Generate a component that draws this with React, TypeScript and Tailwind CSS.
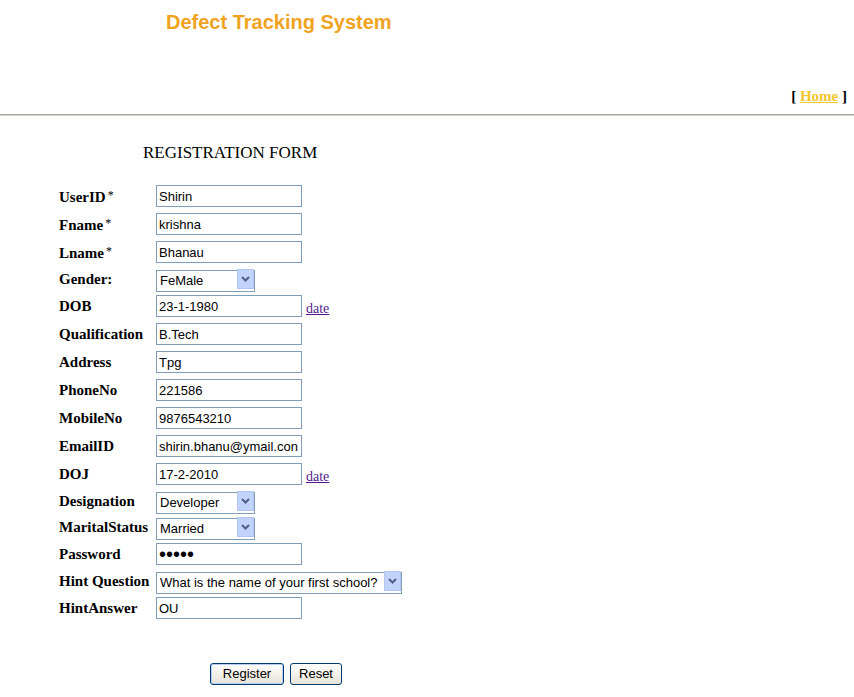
import React from "react";

type Row =
  | { label: string; kind: "text"; value: string; date?: boolean; password?: boolean }
  | { label: string; kind: "select"; value: string; options: string[]; width: string };

const rows: Row[] = [
  { label: "UserID*", kind: "text", value: "Shirin" },
  { label: "Fname*", kind: "text", value: "krishna" },
  { label: "Lname*", kind: "text", value: "Bhanau" },
  { label: "Gender:", kind: "select", value: "FeMale", options: ["Male", "FeMale"], width: "w-[99px]" },
  { label: "DOB", kind: "text", value: "23-1-1980", date: true },
  { label: "Qualification", kind: "text", value: "B.Tech" },
  { label: "Address", kind: "text", value: "Tpg" },
  { label: "PhoneNo", kind: "text", value: "221586" },
  { label: "MobileNo", kind: "text", value: "9876543210" },
  { label: "EmailID", kind: "text", value: "shirin.bhanu@ymail.con" },
  { label: "DOJ", kind: "text", value: "17-2-2010", date: true },
  { label: "Designation", kind: "select", value: "Developer", options: ["Developer", "Tester", "Manager"], width: "w-[99px]" },
  { label: "MaritalStatus", kind: "select", value: "Married", options: ["Single", "Married"], width: "w-[99px]" },
  { label: "Password", kind: "text", value: "abcde", password: true },
  {
    label: "Hint Question",
    kind: "select",
    value: "What is the name of your first school?",
    options: ["What is the name of your first school?", "What is your pet's name?"],
    width: "w-[246px]",
  },
  { label: "HintAnswer", kind: "text", value: "OU" },
];

const Arrow = () => (
  <span className="pointer-events-none absolute right-[1px] top-[1px] bottom-[1px] w-[17px] flex items-center justify-center bg-[#c1d3fb] border border-[#b3c6f0]">
    <svg width="9" height="6" viewBox="0 0 9 6">
      <path d="M1 1 L4.5 4.5 L8 1" fill="none" stroke="#4d6185" strokeWidth="2" />
    </svg>
  </span>
);

// label with a raised, lighter asterisk like the original page
const Label = ({ text }: { text: string }) =>
  text.endsWith("*") ? (
    <>
      {text.slice(0, -1)}
      <span className="ml-[2px] align-[3px] text-[12px] font-normal">*</span>
    </>
  ) : (
    <>{text}</>
  );

const App: React.FC = () => {
  return (
    <div className="w-[854px] h-[697px] bg-white overflow-hidden font-['Liberation_Serif',serif] text-black">
      <div className="h-[44px] pl-[166px] pt-[8px]">
        <h1 className="font-['Liberation_Sans',Arial,sans-serif] font-bold text-[20px] leading-[28px] text-[#f0a31e]">
          Defect Tracking System
        </h1>
      </div>

      <div className="h-[70px] flex items-end justify-end pr-[7px] pb-[9px]">
        <span className="font-bold text-[15px] leading-[18px]">
          [ <a href="#" className="underline text-[#f2c62c]">Home</a> ]
        </span>
      </div>

      <div className="border-t border-[#a5a59a] border-b border-b-[#d4d4cc]" />

      <div className="pl-[143px] pt-[27px] h-[66px] text-[17px] leading-[20px]">REGISTRATION FORM</div>

      <div className="pl-[59px]">
        {rows.map((r) => (
          <div key={r.label} className={`flex items-center ${r.kind === "select" ? "h-[26px]" : "h-[28px]"}`}>
            <label className="w-[97px] shrink-0 font-bold text-[15px] leading-[18px] whitespace-nowrap">
              <Label text={r.label} />
            </label>
            {r.kind === "text" ? (
              <>
                <input
                  type={r.password ? "password" : "text"}
                  defaultValue={r.value}
                  className={`w-[146px] h-[22px] border border-[#7f9db9] px-[2px] font-['Liberation_Sans',Arial,sans-serif] outline-none ${
                    r.password ? "text-[20px] leading-[20px]" : "text-[13px]"
                  }`}
                />
                {r.date && (
                  <a href="#" className="ml-[4px] mt-[6px] underline text-[#551a8b] text-[14px] leading-[16px]">
                    date
                  </a>
                )}
              </>
            ) : (
              <span className={`relative inline-block ${r.width} h-[22px]`}>
                <select
                  defaultValue={r.value}
                  className="appearance-none w-full h-full border border-[#7f9db9] pl-[3px] pr-[20px] font-['Liberation_Sans',Arial,sans-serif] text-[13px] bg-white outline-none"
                >
                  {r.options.map((o) => (
                    <option key={o}>{o}</option>
                  ))}
                </select>
                <Arrow />
              </span>
            )}
          </div>
        ))}
      </div>

      <div className="pl-[210px] pt-[41px] flex gap-[6px]">
        <button className="w-[74px] h-[22px] rounded-[3px] border border-[#003c74] bg-gradient-to-b from-white to-[#e6e3d6] shadow-[inset_0_0_0_1px_#b8cdf5] font-['Liberation_Sans',Arial,sans-serif] text-[13px]">
          Register
        </button>
        <button className="w-[52px] h-[22px] rounded-[3px] border border-[#003c74] bg-gradient-to-b from-white to-[#e6e3d6] font-['Liberation_Sans',Arial,sans-serif] text-[13px]">
          Reset
        </button>
      </div>
    </div>
  );
};

export default App;
